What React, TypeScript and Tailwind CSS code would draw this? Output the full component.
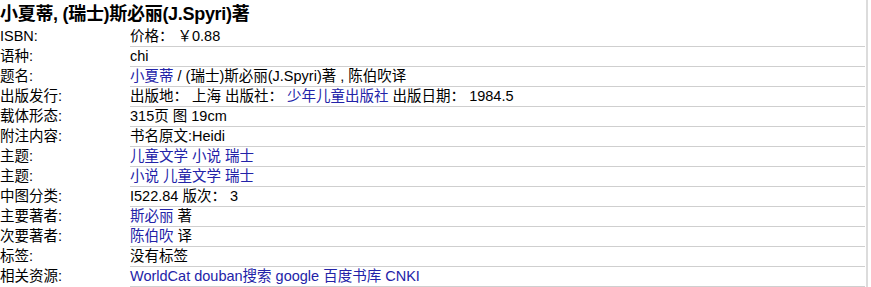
import React from 'react';

type Part = { t: string; link?: boolean };

const rows: { label: string; value: Part[] }[] = [
  { label: 'ISBN:', value: [{ t: '价格： ￥0.88' }] },
  { label: '语种:', value: [{ t: 'chi' }] },
  {
    label: '题名:',
    value: [{ t: '小夏蒂', link: true }, { t: ' / (瑞士)斯必丽(J.Spyri)著 , 陈伯吹译' }],
  },
  {
    label: '出版发行:',
    value: [
      { t: '出版地： 上海 出版社： ' },
      { t: '少年儿童出版社', link: true },
      { t: ' 出版日期： 1984.5' },
    ],
  },
  { label: '载体形态:', value: [{ t: '315页 图 19cm' }] },
  { label: '附注内容:', value: [{ t: '书名原文:Heidi' }] },
  { label: '主题:', value: [{ t: '儿童文学 小说 瑞士', link: true }] },
  { label: '主题:', value: [{ t: '小说 儿童文学 瑞士', link: true }] },
  { label: '中图分类:', value: [{ t: 'I522.84 版次： 3' }] },
  { label: '主要著者:', value: [{ t: '斯必丽', link: true }, { t: ' 著' }] },
  { label: '次要著者:', value: [{ t: '陈伯吹', link: true }, { t: ' 译' }] },
  { label: '标签:', value: [{ t: '没有标签' }] },
  {
    label: '相关资源:',
    value: [{ t: 'WorldCat douban搜索 google 百度书库 CNKI', link: true }],
  },
];

const App = () => {
  return (
    <div className="w-[868px] h-[287px] bg-white border-r-2 border-[#dcdcdc] font-['Liberation_Sans','Noto_Sans_CJK_SC',sans-serif] text-black">
      <h2 className="h-[27px] pt-[3px] text-[18px] leading-[22px] font-bold tracking-[-0.3px]">
        小夏蒂, (瑞士)斯必丽(J.Spyri)著
      </h2>
      <div className="flex flex-col">
        {rows.map((r, i) => (
          <div key={i} className="flex h-[20px] text-[14.5px] leading-[19px]">
            <div className="w-[130px] shrink-0">{r.label}</div>
            <div className="flex-1 mr-[1px] border-b border-[#cfcfcf]">
              {r.value.map((p, j) =>
                p.link ? (
                  <a key={j} href="#" className="text-[#2323a8]">
                    {p.t}
                  </a>
                ) : (
                  <span key={j} className="whitespace-pre">{p.t}</span>
                )
              )}
            </div>
          </div>
        ))}
      </div>
    </div>
  );
};

export default App;
